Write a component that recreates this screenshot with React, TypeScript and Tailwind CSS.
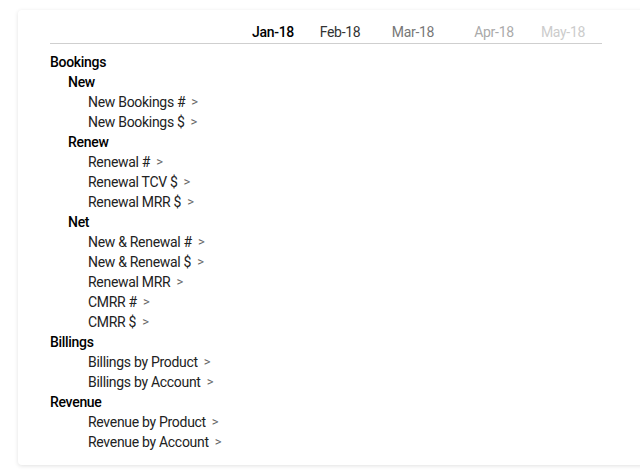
export default function App() {
  const rows: [number, string, boolean][] = [
    [0, "Bookings", true],
    [1, "New", true],
    [2, "New Bookings #", false],
    [2, "New Bookings $", false],
    [1, "Renew", true],
    [2, "Renewal #", false],
    [2, "Renewal TCV $", false],
    [2, "Renewal MRR $", false],
    [1, "Net", true],
    [2, "New & Renewal #", false],
    [2, "New & Renewal $", false],
    [2, "Renewal MRR", false],
    [2, "CMRR #", false],
    [2, "CMRR $", false],
    [0, "Billings", true],
    [2, "Billings by Product", false],
    [2, "Billings by Account", false],
    [0, "Revenue", true],
    [2, "Revenue by Product", false],
    [2, "Revenue by Account", false],
  ];
  const pad = ["pl-0", "pl-[18px]", "pl-[38px]"];
  return (
    <div className="w-[640px] h-[472px] bg-white pt-[10px] pl-[18px] overflow-hidden" style={{ fontFamily: "Roboto, 'Liberation Sans', sans-serif" }}>
      <div className="h-[455px] w-[640px] bg-white rounded-l shadow-[0_1px_4px_rgba(0,0,0,0.12)] pl-[32px] pt-[12px] text-[14px] tracking-[-0.3px]">
        <div className="flex h-[22px] items-center border-b border-[#cfcfcf] w-[552px]">
          <div className="w-[190px]" />
          <div className="w-[66px] text-center font-medium text-black">Jan-18</div>
          <div className="w-[68px] text-center text-[#333]">Feb-18</div>
          <div className="w-[78px] text-center text-[#777]">Mar-18</div>
          <div className="w-[84px] text-center text-[#aaa]">Apr-18</div>
          <div className="w-[54px] text-center text-[#ccc]">May-18</div>
        </div>
        <div className="pt-[8px]">
          {rows.map(([l, t, b], i) => (
            <div key={i} className={`h-[20px] flex items-center ${pad[l]} ${b ? "font-medium text-black" : "text-[#222]"}`}>
              {t}
              {!b && <span className="ml-[6px] text-[#666] text-[13px]">&gt;</span>}
            </div>
          ))}
        </div>
      </div>
    </div>
  );
}
